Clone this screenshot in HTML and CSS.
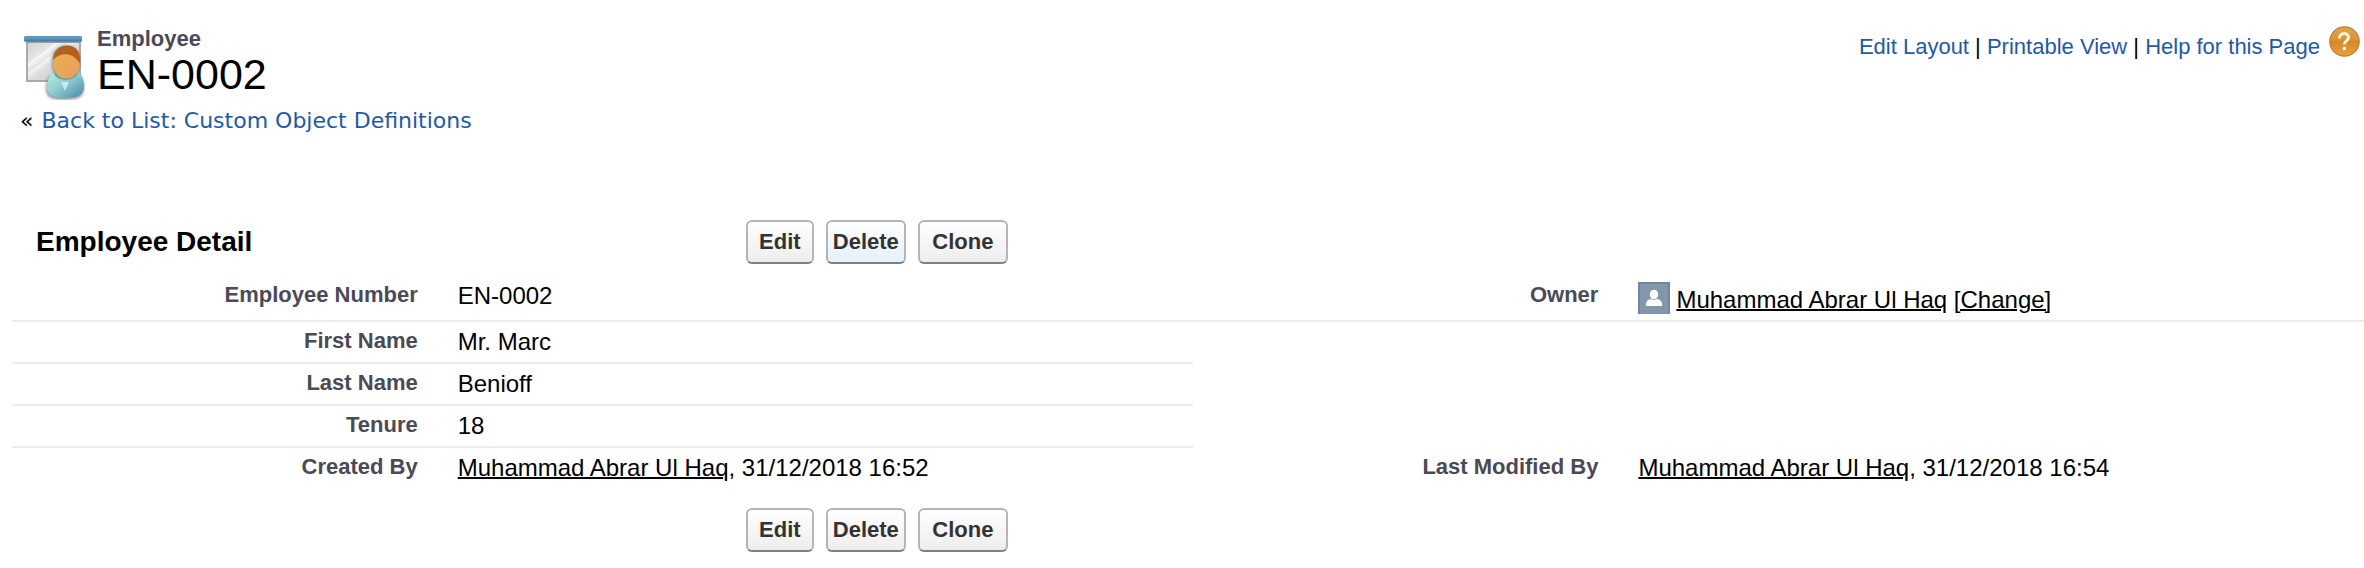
FILE: index.html
```html
<!DOCTYPE html>
<html lang="en">
<head>
<meta charset="utf-8">
<title>Employee: EN-0002</title>
<link rel="stylesheet" href="styles.css">
</head>
<body>
<header class="page-header">
  <div class="page-title">
    <svg class="title-icon" viewBox="0 0 64 64" aria-hidden="true">
      <defs>
        <linearGradient id="board" x1="0" y1="0" x2="1" y2="1">
          <stop offset="0" stop-color="#cfd1d3"/><stop offset=".28" stop-color="#e4e5e6"/>
          <stop offset=".3" stop-color="#f7f7f7"/><stop offset=".4" stop-color="#e2e3e4"/>
          <stop offset=".42" stop-color="#f4f4f4"/><stop offset=".5" stop-color="#dddedf"/>
          <stop offset="1" stop-color="#b9bbbd"/>
        </linearGradient>
        <linearGradient id="shirt" x1="0" y1="0" x2="1" y2="1">
          <stop offset="0" stop-color="#b5efe2"/><stop offset=".45" stop-color="#8fd0cf"/><stop offset="1" stop-color="#4d86ab"/>
        </linearGradient>
        <linearGradient id="face" x1="0" y1="0" x2="1" y2="1">
          <stop offset="0" stop-color="#e6b34e"/><stop offset="1" stop-color="#eb9c60"/>
        </linearGradient>
        <linearGradient id="hair" x1="0" y1="0" x2="1" y2="1">
          <stop offset="0" stop-color="#a86a1c"/><stop offset="1" stop-color="#c4531c"/>
        </linearGradient>
        <filter id="soft" x="-30%" y="-30%" width="160%" height="160%"><feGaussianBlur stdDeviation="1.6"/></filter>
      </defs>
      <rect x="5" y="5" width="53" height="40" fill="url(#board)" stroke="#a9abad" stroke-width="2"/>
      <rect x="4" y="5" width="55" height="2" fill="#9a9da0"/>
      <rect x="2" y="0" width="58" height="5.5" rx="1.5" fill="#5c97bd"/>
      <rect x="2" y="3.5" width="58" height="2" rx="1" fill="#477fa6"/>
      <path d="M30 25c0-10 6-15 14-15s14 6 14 15c0 6-2 10-4 12 5 1 8 7 8 14 0 9-4 13-19 13s-19-3-19-12c0-7 3-13 9-14-2-3-3-7-3-13z" fill="#444" opacity=".55" filter="url(#soft)"/>
      <path d="M34 36c-6 1-9 8-9 15 0 8 6 11 18 11s19-3 19-11c0-8-3-15-8-16z" fill="url(#shirt)"/>
      <path d="M32 38c3 8 21 8 24-1l-2-3H34z" fill="#4f7e86" opacity=".6"/>
      <path d="M39 46l4 9 4-9z" fill="#c4eaec"/>
      <ellipse cx="44.500" cy="27" rx="13.500" ry="15.500" fill="url(#face)"/>
      <path d="M31 24c0-9 6-14.500 14-14.500 9 0 14 6 13 18-3-4-6-8-12-9-5-.8-11 1-15 5.500z" fill="url(#hair)"/>
    </svg>
    <div>
      <h2 class="record-type">Employee</h2>
      <h1 class="record-name">EN-0002</h1>
    </div>
  </div>
  <nav class="page-links">
    <span class="links-text"><a href="#">Edit Layout</a> | <a href="#">Printable View</a> | <a href="#">Help for this Page</a></span>
    <a href="#" class="help" aria-label="Help">
      <svg class="help-icon" viewBox="0 0 31 31" aria-hidden="true">
        <defs>
          <linearGradient id="ball" x1="0" y1="0" x2="0" y2="1">
            <stop offset="0" stop-color="#dda54e"/><stop offset=".45" stop-color="#dd9439"/><stop offset=".5" stop-color="#d88628"/><stop offset="1" stop-color="#e3a440"/>
          </linearGradient>
        </defs>
        <circle cx="15.500" cy="15.500" r="14.700" fill="url(#ball)" stroke="#bb843a" stroke-width="1.200"/>
        <path d="M10.500 12.500c0-6.500 9-6.500 9-.9 0 3.300-4.200 3.400-4.200 7" fill="none" stroke="#fff2dc" stroke-width="3"/>
        <rect x="13.600" y="20.800" width="3.400" height="3.400" rx="1" fill="#fff2dc"/>
      </svg>
    </a>
  </nav>
</header>

<div class="back"><span>«</span><a href="#">Back to List: Custom Object Definitions</a></div>

<main class="detail">
  <div class="button-row">
    <h2 class="section-title">Employee Detail</h2>
    <div class="buttons">
      <button type="button" class="btn btn-edit">Edit</button>
      <button type="button" class="btn btn-delete btn-active">Delete</button>
      <button type="button" class="btn btn-clone">Clone</button>
    </div>
  </div>

  <table class="fields">
    <colgroup><col class="col-label"><col class="col-value"><col class="col-label"><col></colgroup>
    <tbody>
      <tr>
        <th scope="row" class="line">Employee Number</th><td class="line">EN-0002</td>
        <th scope="row" class="line">Owner</th>
        <td class="line">
          <div class="owner">
            <svg class="owner-icon" viewBox="0 0 32 32" aria-hidden="true">
              <rect width="32" height="32" fill="#8496ac"/>
              <path d="M1 32V1h30v31" fill="none" stroke="#74869c" stroke-width="2"/>
              <ellipse cx="16" cy="12.500" rx="4.200" ry="4.800" fill="#fff"/>
              <path d="M8 24c-.5-5 2-6.500 5.500-7 1.500 1.300 3.500 1.300 5 0 3.500.5 6 2 5.500 7z" fill="#fff"/>
            </svg>
            <span><a href="#">Muhammad Abrar Ul Haq</a> <a href="#">[Change]</a></span>
          </div>
        </td>
      </tr>
      <tr><th scope="row" class="line">First Name</th><td class="line">Mr. Marc</td><td></td><td></td></tr>
      <tr><th scope="row" class="line">Last Name</th><td class="line">Benioff</td><td></td><td></td></tr>
      <tr><th scope="row" class="line">Tenure</th><td class="line">18</td><td></td><td></td></tr>
      <tr>
        <th scope="row">Created By</th><td><a href="#">Muhammad Abrar Ul Haq</a>, 31/12/2018 16:52</td>
        <th scope="row">Last Modified By</th><td><a href="#">Muhammad Abrar Ul Haq</a>, 31/12/2018 16:54</td>
      </tr>
    </tbody>
  </table>

  <div class="button-row">
    <div class="buttons">
      <button type="button" class="btn btn-edit">Edit</button>
      <button type="button" class="btn btn-delete">Delete</button>
      <button type="button" class="btn btn-clone">Clone</button>
    </div>
  </div>
</main>
</body>
</html>
```

FILE: styles.css
```css
* { box-sizing: border-box; }

body {
  margin: 0;
  background: #fff;
  color: #000;
  font-family: Arial, "Liberation Sans", sans-serif;
  font-size: 24px;
  line-height: 28px;
}

h1, h2 { margin: 0; }

a { color: #1f5aa5; text-decoration: none; }

.page-header {
  display: flex;
  justify-content: space-between;
  align-items: flex-start;
  padding: 26px 4px 0 22px;
}

.page-title { display: flex; gap: 11px; }

.title-icon { width: 64px; height: 64px; margin-top: 10px; }

.record-type {
  color: #4a4a56;
  font-size: 22px;
  line-height: 26px;
}

.record-name {
  font-size: 43px;
  font-weight: normal;
  line-height: 44px;
}

.page-links {
  display: flex;
  gap: 9px;
  font-size: 22px;
  line-height: 26px;
}

.links-text { margin-top: 8px; }

.help-icon { display: block; width: 31px; height: 31px; }

.back {
  display: flex;
  gap: 8px;
  margin-top: 8px;
  padding-left: 20px;
  font-family: "DejaVu Sans", Verdana, sans-serif;
  font-size: 22px;
  line-height: 26px;
}

.detail {
  margin-top: 86px;
  padding: 0 0 16px 12px;
}

.button-row {
  display: grid;
  grid-template-columns: 31.2% 1fr;
  align-items: center;
}

.section-title {
  padding-left: 24px;
  font-size: 28px;
  line-height: 36px;
}

.buttons {
  display: flex;
  grid-column: 2;
  gap: 12px;
}

.btn {
  height: 44px;
  padding: 0;
  border: 2px solid #b5b5b5;
  border-bottom-color: #7f7f7f;
  border-radius: 6px;
  background: linear-gradient(#fff, #ededed);
  color: #333;
  font: bold 22px/28px Arial, "Liberation Sans", sans-serif;
}

.btn-active { background: linear-gradient(#fff, #e2f1fd); }
.btn-edit { width: 68px; }
.btn-delete { width: 80px; }
.btn-clone { width: 90px; }

.fields {
  width: 100%;
  margin: 12px 0 20px;
  border-collapse: separate;
  border-spacing: 0;
  table-layout: fixed;
}

.col-label { width: 18.1%; }
.col-value { width: 32.1%; }

.fields th,
.fields td {
  padding: 6px 20px;
  vertical-align: top;
  text-align: left;
}

.fields th {
  color: #4a4a56;
  font-size: 22px;
  line-height: 26px;
  text-align: right;
}

.fields td a { color: #000; text-decoration: underline; text-decoration-thickness: 2px; }

.fields .line { border-bottom: 2px solid #ececec; }

.owner {
  display: flex;
  align-items: flex-end;
  gap: 6px;
}

.owner-icon { width: 32px; height: 32px; }
```
